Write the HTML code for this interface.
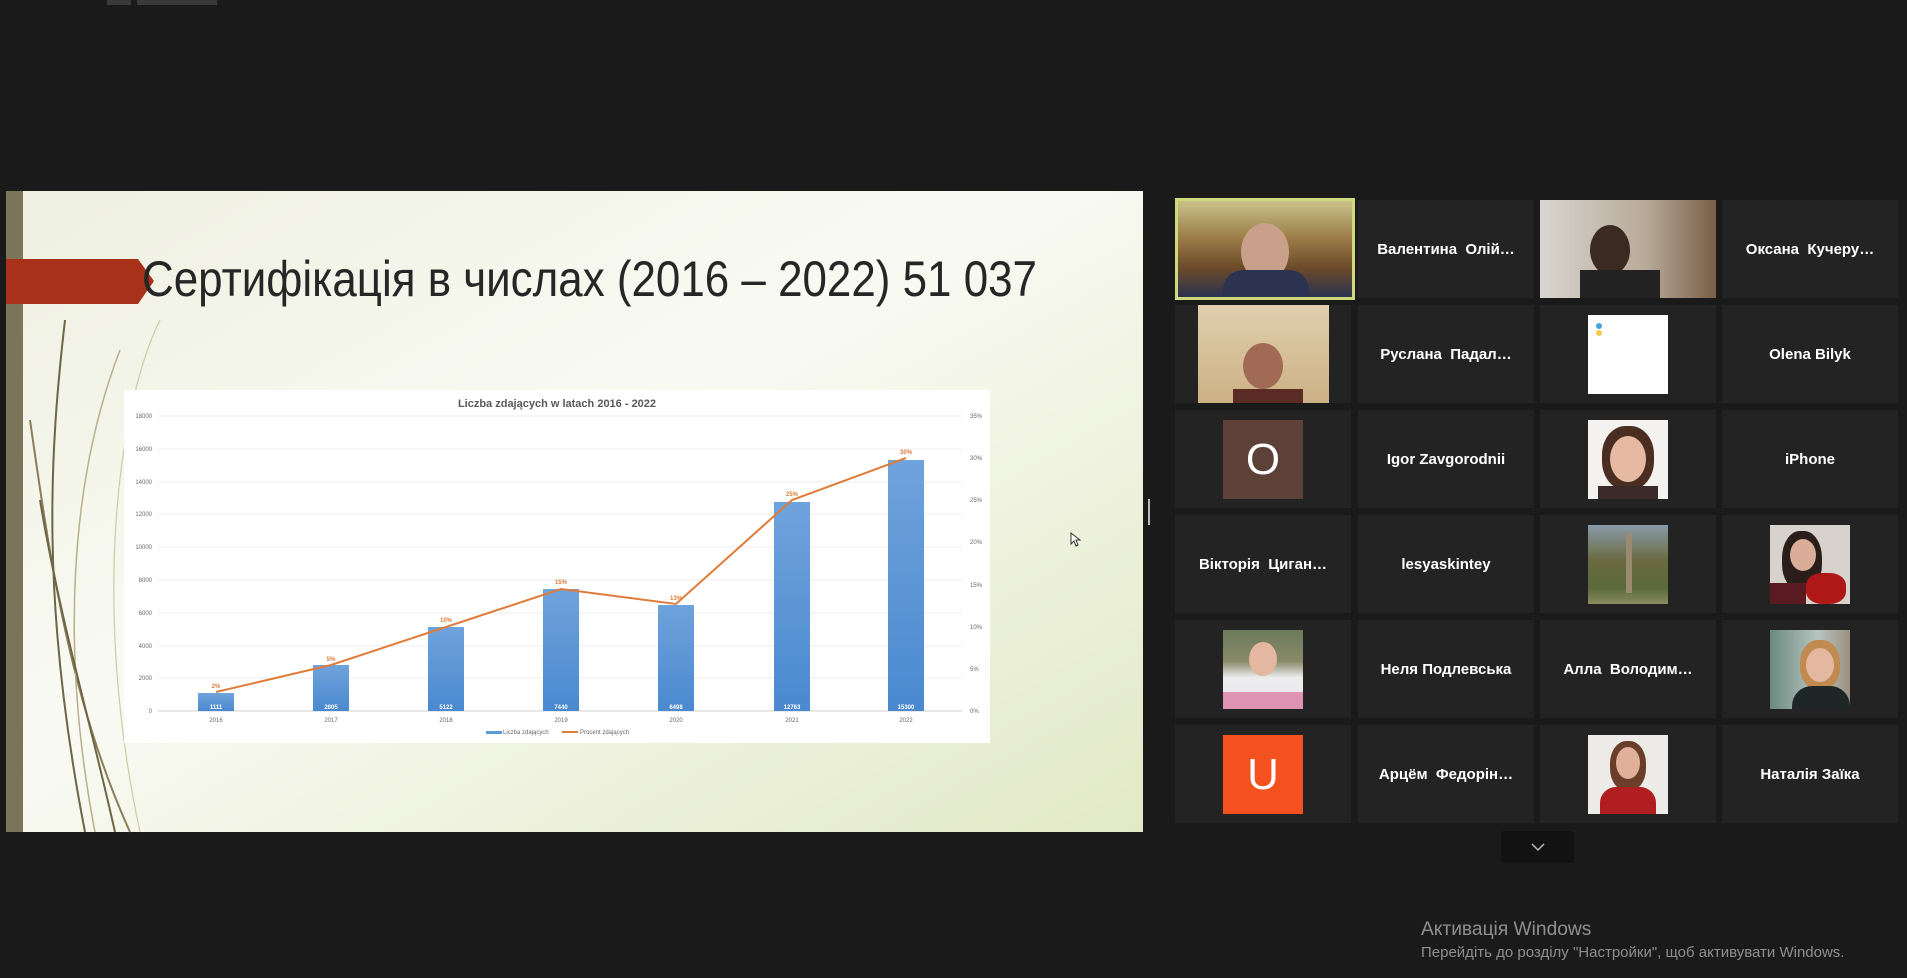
<!DOCTYPE html>
<html><head><meta charset="utf-8">
<style>
html,body{margin:0;padding:0;width:1907px;height:978px;background:#1a1a1a;overflow:hidden;font-family:"Liberation Sans","Noto Sans CJK SC",sans-serif;}
.abs{position:absolute}
.tile{position:absolute;width:176px;height:98px;background:#232323;color:#fff;font-weight:bold;font-size:15px;display:flex;align-items:center;justify-content:center;overflow:hidden;white-space:nowrap}
.av{position:absolute;width:80px;height:79px;left:48px;top:10px}
</style></head><body>
<div class="abs" style="left:107px;top:0;width:24px;height:5px;background:#3a3a3a"></div>
<div class="abs" style="left:137px;top:0;width:80px;height:5px;background:#3a3a3a"></div>

<svg class="abs" style="left:0;top:0" width="1160" height="840">
<defs>
<linearGradient id="bg" x1="0" y1="0" x2="1" y2="1">
<stop offset="0" stop-color="#eef0e0"/><stop offset="0.45" stop-color="#f9faf3"/><stop offset="1" stop-color="#e2e9c6"/></linearGradient>
<linearGradient id="bar" x1="0" y1="0" x2="0" y2="1"><stop offset="0" stop-color="#6fa3dc"/><stop offset="1" stop-color="#4a89cf"/></linearGradient>
</defs>
<rect x="6" y="191" width="1137" height="641" fill="url(#bg)"/>
<rect x="6" y="191" width="17" height="641" fill="#7b7458"/>
<g fill="none" stroke="#6e6446" stroke-width="2">
<path d="M65 320 C50 450 40 600 85 832"/>
<path d="M30 420 C50 560 70 700 130 832" stroke="#8a7d58"/>
<path d="M120 350 C70 480 60 650 95 832" stroke="#b7b08a" stroke-width="1.5"/>
<path d="M160 320 C120 400 90 600 140 832" stroke="#cfcaa6" stroke-width="1.2"/>
<path d="M40 500 C60 620 90 720 115 832"/>
</g>
<polygon points="6,259 138,259 154,281 138,304 6,304" fill="#a83219"/>
<text x="142" y="296" font-family="Liberation Sans Narrow, Liberation Sans, sans-serif" font-size="50" font-weight="300" fill="#262626" textLength="895" lengthAdjust="spacingAndGlyphs">Сертифікація в числах (2016 – 2022) 51 037</text>
<rect x="124" y="390" width="866" height="353" fill="#fff"/>
<text x="557" y="407" font-size="11" font-weight="bold" fill="#595959" text-anchor="middle">Liczba zdających w latach 2016 - 2022</text>
<g stroke="#ececec" stroke-width="1">
<line x1="158" x2="962" y1="416" y2="416"/><line x1="158" x2="962" y1="449" y2="449"/><line x1="158" x2="962" y1="482" y2="482"/><line x1="158" x2="962" y1="514" y2="514"/><line x1="158" x2="962" y1="547" y2="547"/><line x1="158" x2="962" y1="580" y2="580"/><line x1="158" x2="962" y1="613" y2="613"/><line x1="158" x2="962" y1="646" y2="646"/><line x1="158" x2="962" y1="678" y2="678"/>
</g>
<line x1="158" x2="962" y1="711" y2="711" stroke="#d0d0d0"/>
<g font-size="6" fill="#666" text-anchor="end">
<text x="152" y="418">18000</text><text x="152" y="451">16000</text><text x="152" y="484">14000</text><text x="152" y="516">12000</text><text x="152" y="549">10000</text><text x="152" y="582">8000</text><text x="152" y="615">6000</text><text x="152" y="648">4000</text><text x="152" y="680">2000</text><text x="152" y="713">0</text>
</g>
<g font-size="6" fill="#666">
<text x="970" y="418">35%</text><text x="970" y="460">30%</text><text x="970" y="502">25%</text><text x="970" y="544">20%</text><text x="970" y="587">15%</text><text x="970" y="629">10%</text><text x="970" y="671">5%</text><text x="970" y="713">0%</text>
</g>
<g fill="url(#bar)">
<rect x="198" y="693" width="36" height="18"/><rect x="313" y="665" width="36" height="46"/><rect x="428" y="627" width="36" height="84"/><rect x="543" y="589" width="36" height="122"/><rect x="658" y="605" width="36" height="106"/><rect x="774" y="502" width="36" height="209"/><rect x="888" y="460" width="36" height="251"/>
</g>
<g font-size="6" fill="#fff" font-weight="bold" text-anchor="middle">
<text x="216" y="709">1111</text><text x="331" y="709">2805</text><text x="446" y="709">5122</text><text x="561" y="709">7440</text><text x="676" y="709">6498</text><text x="792" y="709">12763</text><text x="906" y="709">15300</text>
</g>
<polyline points="216,692 331,665 446,627 561,589 676,604 792,500 906,458" fill="none" stroke="#e07c3a" stroke-width="2"/>
<g font-size="6" fill="#e07c3a" font-weight="bold" text-anchor="middle">
<text x="216" y="688">2%</text><text x="331" y="661">5%</text><text x="446" y="622">10%</text><text x="561" y="584">15%</text><text x="676" y="600">13%</text><text x="792" y="496">25%</text><text x="906" y="454">30%</text>
</g>
<g font-size="6" fill="#666" text-anchor="middle">
<text x="216" y="722">2016</text><text x="331" y="722">2017</text><text x="446" y="722">2018</text><text x="561" y="722">2019</text><text x="676" y="722">2020</text><text x="792" y="722">2021</text><text x="906" y="722">2022</text>
</g>
<rect x="486" y="731" width="16" height="3" fill="#5b9bd5"/><text x="503" y="734" font-size="6" fill="#666">Liczba zdających</text>
<line x1="562" x2="578" y1="732" y2="732" stroke="#e07c3a" stroke-width="2"/><text x="580" y="734" font-size="6" fill="#666">Procent zdających</text>
<path d="M1071 533 l0 11 l3 -3 l2 5 l2 -1 l-2 -5 l4 0 z" fill="#fff" stroke="#333" stroke-width="1"/>
</svg>
<div class="abs" style="left:1148px;top:499px;width:2px;height:26px;background:#bbb"></div>

<div class="tile" style="left:1175px;top:198px;width:180px;height:102px;background:#cdd97a"><div class="abs" style="left:3px;top:3px;width:174px;height:96px;background:linear-gradient(180deg,#c9c28a 0%,#9a7a45 40%,#6b4a2a 70%,#2a3250 100%)"></div><div class="abs" style="left:66px;top:25px;width:48px;height:58px;border-radius:50%;background:#c9a08a"></div><div class="abs" style="left:48px;top:72px;width:86px;height:26px;background:#2c3350;border-radius:20px 20px 0 0"></div></div>
<div class="tile" style="left:1358px;top:200px">Валентина&nbsp; Олій…</div>
<div class="tile" style="left:1540px;top:200px;background:linear-gradient(90deg,#d8d5d0,#b8aa98 60%,#7a5e48)"><div class="abs" style="left:50px;top:25px;width:40px;height:50px;border-radius:50%;background:#3a2a22"></div><div class="abs" style="left:40px;top:70px;width:80px;height:30px;background:#222"></div></div>
<div class="tile" style="left:1722px;top:200px">Оксана&nbsp; Кучеру…</div>
<div class="tile" style="left:1175px;top:305px"><div class="abs" style="left:23px;top:0;width:131px;height:99px;background:linear-gradient(180deg,#e0cfae,#cbb083)"></div><div class="abs" style="left:68px;top:38px;width:40px;height:46px;border-radius:50%;background:#a06a55"></div><div class="abs" style="left:58px;top:84px;width:70px;height:15px;background:#5a2a24"></div></div>
<div class="tile" style="left:1358px;top:305px">Руслана&nbsp; Падал…</div>
<div class="tile" style="left:1540px;top:305px"><div class="av" style="background:#fff;top:10px"><div class="abs" style="left:8px;top:8px;width:6px;height:6px;border-radius:50%;background:#4aa3e0"></div><div class="abs" style="left:8px;top:15px;width:6px;height:6px;border-radius:50%;background:#f2c94c"></div></div></div>
<div class="tile" style="left:1722px;top:305px">Olena Bilyk</div>
<div class="tile" style="left:1175px;top:410px"><div class="av" style="background:#5d4037;display:flex;align-items:center;justify-content:center;font-weight:normal;font-size:44px">O</div></div>
<div class="tile" style="left:1358px;top:410px">Igor Zavgorodnii</div>
<div class="tile" style="left:1540px;top:410px"><div class="av" style="background:#f4f2f0"><div class="abs" style="left:14px;top:6px;width:52px;height:64px;border-radius:45%;background:#4a2e22"></div><div class="abs" style="left:22px;top:16px;width:36px;height:46px;border-radius:50%;background:#e6b9a3"></div><div class="abs" style="left:10px;top:66px;width:60px;height:13px;background:#3a2a2a"></div></div></div>
<div class="tile" style="left:1722px;top:410px">iPhone</div>
<div class="tile" style="left:1175px;top:515px">Вікторія&nbsp; Циган…</div>
<div class="tile" style="left:1358px;top:515px">lesyaskintey</div>
<div class="tile" style="left:1540px;top:515px"><div class="av" style="background:linear-gradient(180deg,#8a9aa8,#6a6a40 45%,#5a6a3a 80%,#8a8a60)"><div class="abs" style="left:38px;top:8px;width:6px;height:60px;background:#9a8a70"></div></div></div>
<div class="tile" style="left:1722px;top:515px"><div class="av" style="background:#d8d2cc"><div class="abs" style="left:12px;top:6px;width:40px;height:60px;border-radius:45%;background:#2a1e1a"></div><div class="abs" style="left:20px;top:14px;width:26px;height:32px;border-radius:50%;background:#d9ad98"></div><div class="abs" style="left:36px;top:48px;width:40px;height:31px;border-radius:40%;background:#b01818"></div><div class="abs" style="left:0;top:58px;width:36px;height:21px;background:#5a1a22"></div></div></div>
<div class="tile" style="left:1175px;top:620px"><div class="av" style="background:linear-gradient(180deg,#6a7a5a,#8a8a6a 40%,#ececec 60%,#e8e8f0)"><div class="abs" style="left:26px;top:12px;width:28px;height:34px;border-radius:50%;background:#e4b8a0"></div><div class="abs" style="left:0;top:62px;width:80px;height:17px;background:#d85a8a;opacity:.6"></div></div></div>
<div class="tile" style="left:1358px;top:620px">Неля Подлевська</div>
<div class="tile" style="left:1540px;top:620px">Алла&nbsp; Володим…</div>
<div class="tile" style="left:1722px;top:620px"><div class="av" style="background:linear-gradient(90deg,#6a8a80,#b8c4c0 60%,#9a9080)"><div class="abs" style="left:30px;top:10px;width:40px;height:50px;border-radius:45%;background:#c08a50"></div><div class="abs" style="left:36px;top:18px;width:28px;height:34px;border-radius:50%;background:#e4b8a0"></div><div class="abs" style="left:22px;top:56px;width:58px;height:23px;background:#1e2626;border-radius:20px 20px 0 0"></div></div></div>
<div class="tile" style="left:1175px;top:725px"><div class="av" style="background:#f4511e;display:flex;align-items:center;justify-content:center;font-weight:normal;font-size:44px">U</div></div>
<div class="tile" style="left:1358px;top:725px">Арцём&nbsp; Федорін…</div>
<div class="tile" style="left:1540px;top:725px"><div class="av" style="background:#ecebe8"><div class="abs" style="left:22px;top:6px;width:36px;height:50px;border-radius:45%;background:#6a3e28"></div><div class="abs" style="left:28px;top:12px;width:24px;height:32px;border-radius:50%;background:#e0b09a"></div><div class="abs" style="left:12px;top:52px;width:56px;height:27px;background:#b01e22;border-radius:16px 16px 0 0"></div></div></div>
<div class="tile" style="left:1722px;top:725px">Наталія Заїка</div>

<div class="abs" style="left:1501px;top:831px;width:73px;height:32px;background:#121212;border-radius:3px"></div>
<svg class="abs" style="left:1530px;top:841px" width="16" height="12"><path d="M2 3 L8 9 L14 3" fill="none" stroke="#bbb" stroke-width="1.5"/></svg>

<div class="abs" style="left:1421px;top:919px;font-size:19.2px;color:#8f8f8f">Активація Windows</div>
<div class="abs" style="left:1421px;top:944px;font-size:15px;color:#8f8f8f">Перейдіть до розділу "Настройки", щоб активувати Windows.</div>
</body></html>
